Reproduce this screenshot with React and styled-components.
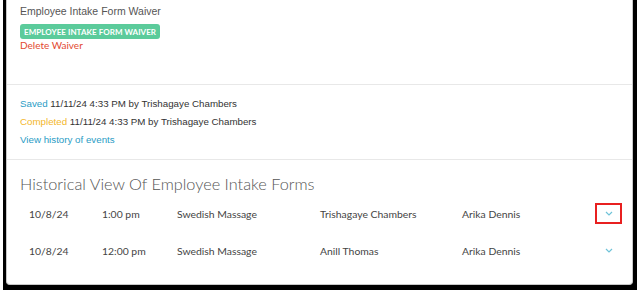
import React from 'react'
import styled, { createGlobalStyle } from 'styled-components'

const GlobalStyle = createGlobalStyle`
  body {
    margin: 0;
    background: #fff;
    font-family: "Liberation Sans", Arial, sans-serif;
  }
`

const Frame = styled.div`
  box-sizing: border-box;
  width: 634px;
  height: 290px;
  margin-left: 3px;
  padding: 0 4px 5px 3px;
  background: #000;
`

const Card = styled.div`
  box-sizing: border-box;
  height: 100%;
  background: #fff;
  border: 1px solid #c8c8c8;
  border-top: none;
  border-radius: 0 0 4px 4px;
  display: flex;
  flex-direction: column;
`

const Section = styled.div`
  box-sizing: border-box;
  height: ${props => (props.height ? props.height + 'px' : 'auto')};
  padding: ${props => props.pad || '0 13px'};
  border-bottom: ${props => (props.divider ? '1px solid #e8e8e8' : 'none')};
  display: flex;
  flex-direction: column;
`

const Title = styled.div`
  font-size: 10.5px;
  color: #555;
  line-height: 14px;
  margin-top: 4px;
`

const Badge = styled.span`
  align-self: flex-start;
  margin-top: 6px;
  padding: 0 4px;
  height: 15px;
  display: flex;
  align-items: center;
  background: #5bcb9b;
  color: #fff;
  border-radius: 3px;
  font-family: Lato, "Liberation Sans", sans-serif;
  font-size: 8px;
  font-weight: 700;
  letter-spacing: 0.05px;
  text-transform: uppercase;
`

const LinkText = styled.span`
  font-family: Lato, "Liberation Sans", sans-serif;
  font-size: 10px;
  line-height: 13px;
  color: ${props => props.color};
`

const Line = styled.div`
  font-size: 9.75px;
  line-height: 18px;
  color: #333;
`

const Label = styled.span`
  color: ${props => props.color};
`

const Heading = styled.h2`
  margin: 14px 0 1px;
  font-family: Lato, "Liberation Sans", sans-serif;
  font-weight: 300;
  font-size: 16.3px;
  line-height: 20px;
  color: #555;
`

const Row = styled.div`
  display: grid;
  grid-template-columns: 73px 75px 143px 142px 1fr 27px;
  align-items: center;
  height: 37px;
  padding-left: 9px;
  padding-right: 10px;
  font-family: Lato, "Liberation Sans", sans-serif;
  font-size: 10.4px;
  color: #444;
`

const Toggle = styled.button`
  box-sizing: border-box;
  width: 27px;
  height: 21px;
  padding: 0;
  display: flex;
  align-items: center;
  justify-content: center;
  background: transparent;
  border-width: 2px;
  border-style: solid;
  border-color: ${props => (props.$focused ? '#e82020' : 'transparent')};
  border-radius: 0;
  cursor: pointer;
`

const Chevron = () => (
  <svg width="8" height="5" viewBox="0 0 8 5">
    <path d="M1 1l3 3 3-3" fill="none" stroke="#6fc3d8" strokeWidth="1.2" />
  </svg>
)

const forms = [
  { date: '10/8/24', time: '1:00 pm', service: 'Swedish Massage', client: 'Trishagaye Chambers', staff: 'Arika Dennis' },
  { date: '10/8/24', time: '12:00 pm', service: 'Swedish Massage', client: 'Anill Thomas', staff: 'Arika Dennis' },
]

const App = () => (
  <>
    <GlobalStyle />
    <Frame>
      <Card>
        <Section height={85} divider>
          <Title>Employee Intake Form Waiver</Title>
          <Badge>Employee Intake Form Waiver</Badge>
          <LinkText color="#e2492f">Delete Waiver</LinkText>
        </Section>
        <Section height={75} divider pad="10px 13px 0">
          <Line>
            <Label color="#2a9cc5">Saved</Label> 11/11/24 4:33 PM by Trishagaye Chambers
          </Line>
          <Line>
            <Label color="#f3b72c">Completed</Label> 11/11/24 4:33 PM by Trishagaye Chambers
          </Line>
          <Line>
            <Label color="#2a9cc5">View history of events</Label>
          </Line>
        </Section>
        <Section pad="0 0 0 13px">
          <Heading>Historical View Of Employee Intake Forms</Heading>
          {forms.map((f, i) => (
            <Row key={i}>
              <span>{f.date}</span>
              <span>{f.time}</span>
              <span>{f.service}</span>
              <span>{f.client}</span>
              <span>{f.staff}</span>
              <Toggle $focused={i === 0}>
                <Chevron />
              </Toggle>
            </Row>
          ))}
        </Section>
      </Card>
    </Frame>
  </>
)

export default App
